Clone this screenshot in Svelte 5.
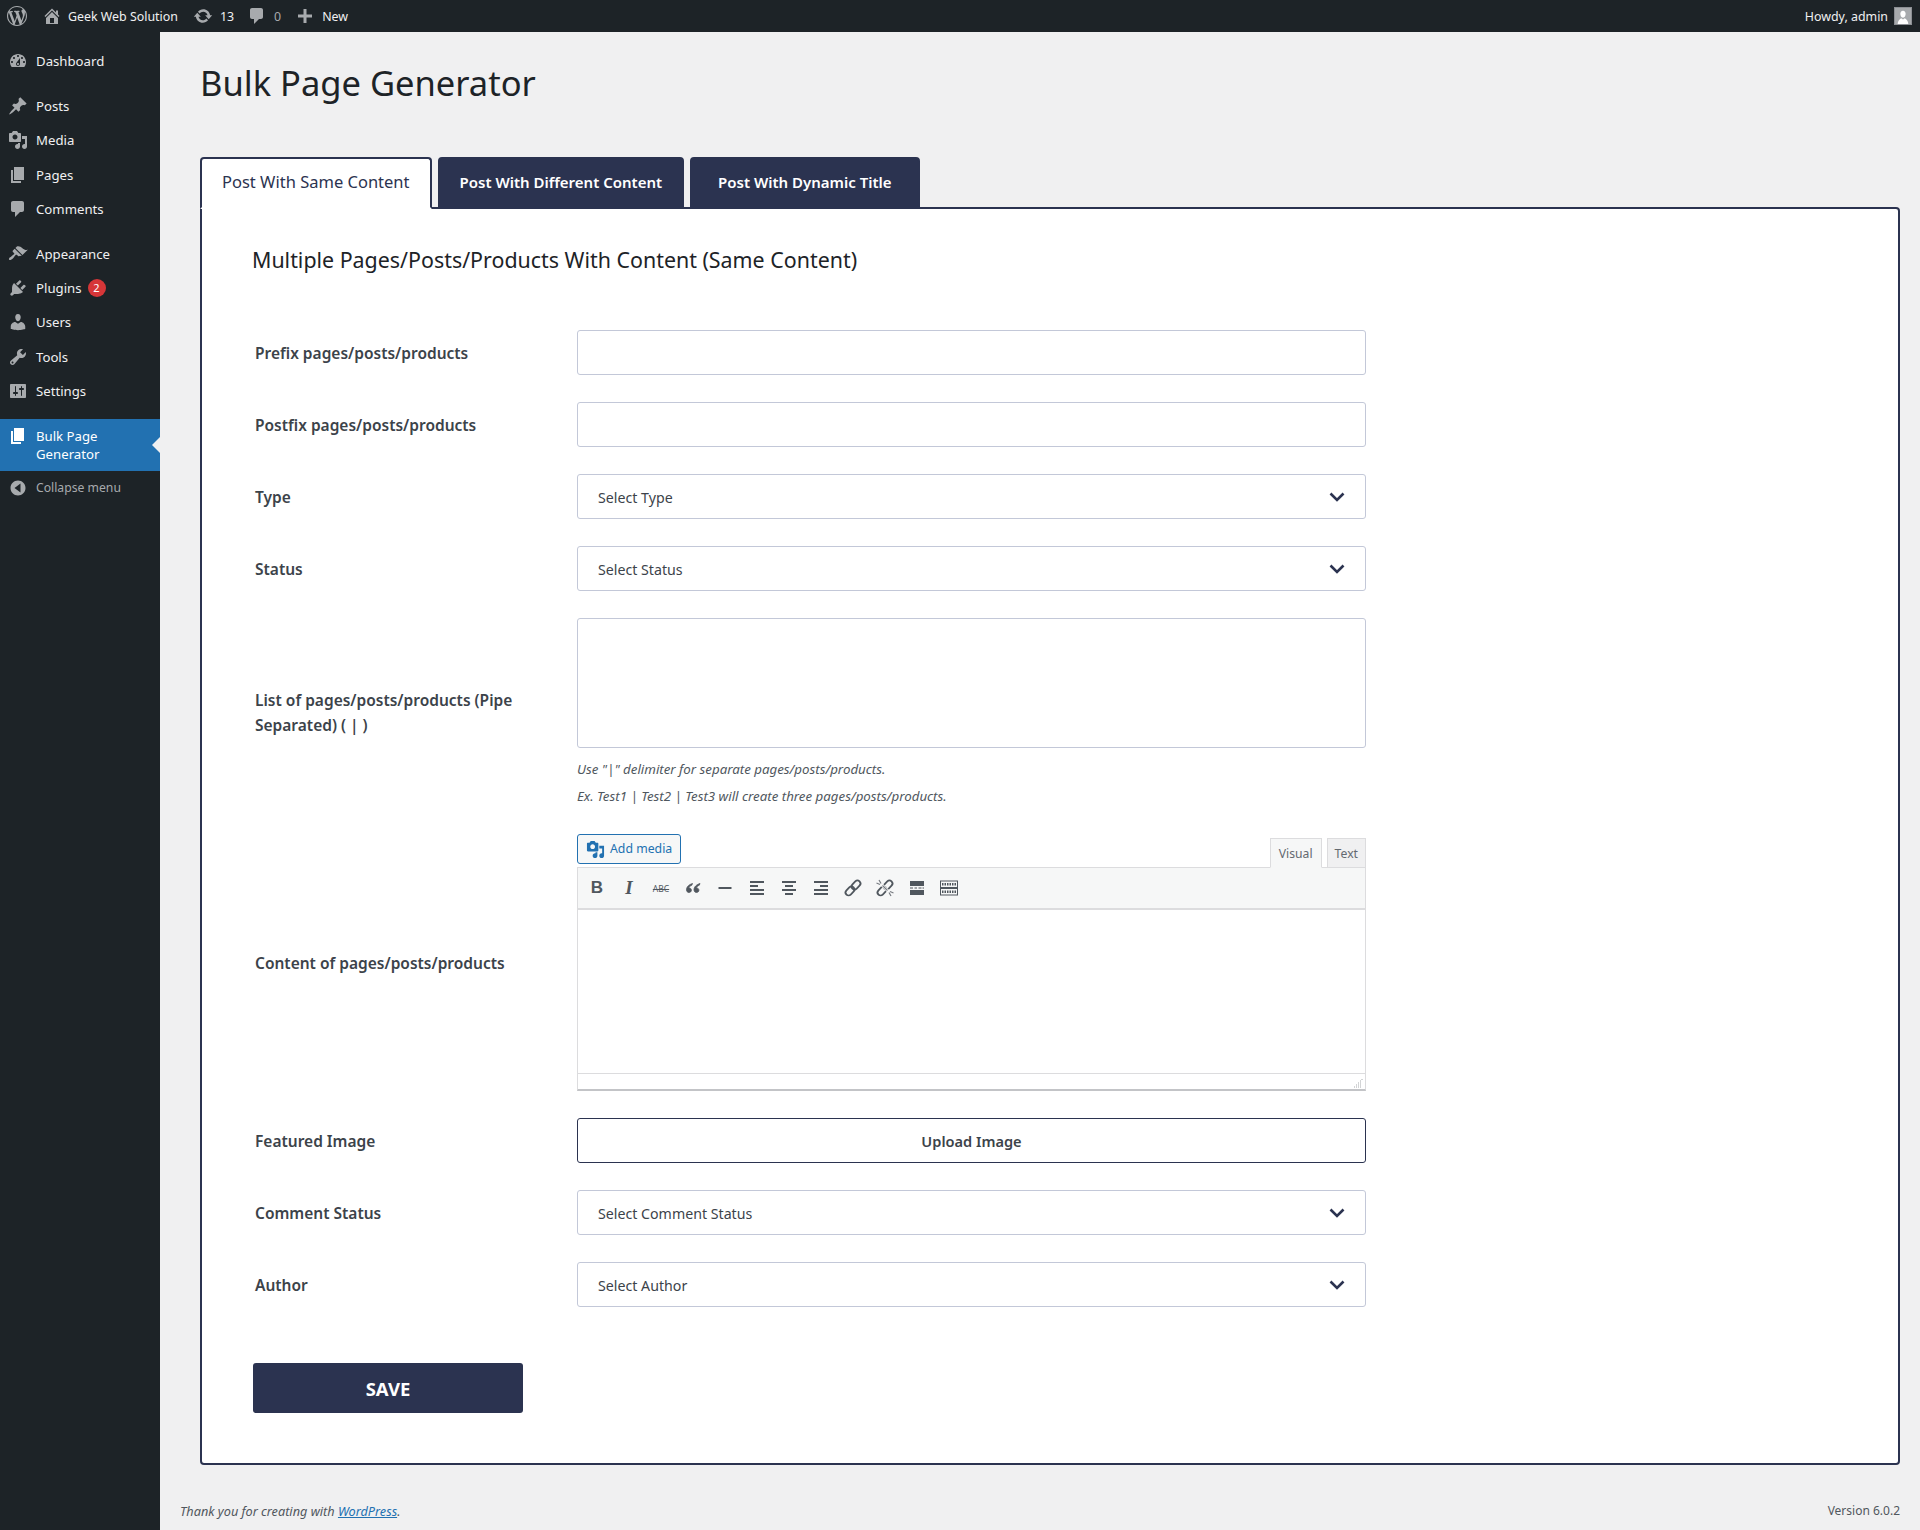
<script>
  const wpLogo = "M20 10c0-5.51-4.49-10-10-10C4.48 0 0 4.49 0 10c0 5.52 4.48 10 10 10 5.51 0 10-4.48 10-10zM7.78 15.37L4.37 6.22c.55-.02 1.17-.08 1.17-.08.5-.06.44-1.13-.06-1.11 0 0-1.45.11-2.37.11-.18 0-.37 0-.58-.01C4.12 2.69 6.87 1.11 10 1.11c2.33 0 4.45.87 6.05 2.34-.68-.11-1.65.39-1.65 1.58 0 .74.45 1.36.9 2.1.35.61.55 1.36.55 2.46 0 1.49-1.4 5-1.4 5l-3.03-8.37c.54-.02.82-.17.82-.17.5-.05.44-1.25-.06-1.22 0 0-1.44.12-2.38.12-.87 0-2.33-.12-2.33-.12-.5-.03-.56 1.2-.06 1.22l.92.08 1.26 3.41zM17.41 10c.24-.64.74-1.87.43-4.25.7 1.29 1.05 2.71 1.05 4.25 0 3.29-1.73 6.24-4.4 7.78.97-2.59 1.94-5.2 2.92-7.78zM6.1 18.09C3.12 16.65 1.11 13.53 1.11 10c0-1.3.23-2.48.72-3.59C3.25 10.3 4.67 14.2 6.1 18.09zm4.03-6.63l2.58 6.98c-.86.29-1.76.45-2.71.45-.79 0-1.57-.11-2.29-.33.81-2.38 1.62-4.74 2.42-7.1z";
  const home = "M16 8.5l1.53 1.53-1.06 1.06L10 4.62l-6.47 6.47-1.06-1.06L10 2.5l4 4v-2h2v4zm-6-2.46l6 5.99V18H4v-6.03zM12 17v-5H8v5h4z";
  const updates = "M10.2 3.28c3.53 0 6.43 2.61 6.92 6h2.08l-3.5 4-3.5-4h2.32c-.45-1.97-2.21-3.45-4.32-3.45-1.45 0-2.73.71-3.54 1.78L4.95 5.66C6.23 4.2 8.11 3.28 10.2 3.28zm-.4 13.44c-3.52 0-6.43-2.61-6.92-6H.8l3.5-4c1.17 1.33 2.33 2.67 3.5 4H5.48c.45 1.97 2.21 3.45 4.32 3.45 1.45 0 2.73-.71 3.54-1.78l1.71 1.95c-1.28 1.46-3.15 2.38-5.25 2.38z";
  const comment = "M5 2h9c1.1 0 2 .9 2 2v7c0 1.1-.9 2-2 2h-2l-5 5v-5H5c-1.1 0-2-.9-2-2V4c0-1.1.9-2 2-2z";
  const plus = "M17 8.5v3h-5.5V17h-3v-5.5H3v-3h5.5V3h3v5.5z";
  const media = "M13 11V4c0-.55-.45-1-1-1h-1.67L9 1H5L3.67 3H2c-.55 0-1 .45-1 1v7c0 .55.45 1 1 1h10c.55 0 1-.45 1-1zM7 4.5c1.38 0 2.5 1.12 2.5 2.5S8.38 9.5 7 9.5 4.5 8.38 4.5 7 5.62 4.5 7 4.5zM14 6h5v10.5c0 1.38-1.12 2.5-2.5 2.5S14 17.88 14 16.5s1.12-2.5 2.5-2.5c.17 0 .34.02.5.05V9h-3V6zm-4 8.05V13h2v3.5c0 1.38-1.12 2.5-2.5 2.5S7 17.88 7 16.5 8.12 14 9.5 14c.17 0 .34.02.5.05z";
  const page = "M6 15V2h10v13H6zm-1 1h8v2H3V5h2v11z";

  const menu = [
    { label: "Dashboard", icon: "M3.76 16h12.48c1.1-1.37 1.76-3.11 1.76-5 0-4.42-3.58-8-8-8s-8 3.58-8 8c0 1.89.66 3.63 1.76 5zM10 4c.55 0 1 .45 1 1s-.45 1-1 1-1-.45-1-1 .45-1 1-1zM6 6c.55 0 1 .45 1 1s-.45 1-1 1-1-.45-1-1 .45-1 1-1zm8 0c.55 0 1 .45 1 1s-.45 1-1 1-1-.45-1-1 .45-1 1-1zm-5.37 5.55L12 7v6c0 1.1-.9 2-2 2s-2-.9-2-2c0-.57.24-1.08.63-1.45zM4 10c.55 0 1 .45 1 1s-.45 1-1 1-1-.45-1-1 .45-1 1-1zm12 0c.55 0 1 .45 1 1s-.45 1-1 1-1-.45-1-1 .45-1 1-1zm-5 3c0-.55-.45-1-1-1s-1 .45-1 1 .45 1 1 1 1-.45 1-1z", gap: true },
    { label: "Posts", icon: "M10.44 3.02l1.82-1.82 6.36 6.35-1.83 1.82c-1.05-.68-2.48-.57-3.41.36l-.75.75c-.92.93-1.04 2.35-.35 3.41l-1.83 1.82-2.41-2.41-2.8 2.79c-.42.42-3.38 2.71-3.8 2.29s1.86-3.39 2.28-3.81l2.79-2.79L4.1 9.36l1.83-1.82c1.05.69 2.48.57 3.4-.36l.75-.75c.93-.92 1.05-2.35.36-3.41z" },
    { label: "Media", icon: media },
    { label: "Pages", icon: page },
    { label: "Comments", icon: comment, gap: true },
    { label: "Appearance", icon: "M14.48 11.06L7.41 3.99l1.5-1.5c.5-.56 2.3-.47 3.51.32 1.21.8 1.43 1.28 2.91 2.1 1.18.64 2.45 1.26 4.45.85zm-.71.71L6.7 4.7 4.93 6.47c-.39.39-.39 1.02 0 1.41l1.06 1.06c.39.39.39 1.03 0 1.42-.6.6-1.43 1.11-2.21 1.69-.35.26-.7.53-1.01.84C1.43 13.23.4 14.97 1.2 15.77c.79.8 2.54-.23 3.89-1.58.31-.31.58-.66.85-1.02.57-.78 1.08-1.61 1.69-2.21.39-.39 1.02-.39 1.41 0l1.06 1.06c.39.39 1.02.39 1.41 0z" },
    { label: "Plugins", badge: 2, icon: "M13.11 4.36L9.87 7.6 8 5.73l3.24-3.24c.35-.34 1.05-.2 1.56.32.52.51.66 1.21.31 1.55zm-8 1.77l.91-1.12 9.01 9.01-1.19.84c-.71.71-2.63 1.16-3.82 1.16H6.14L4.9 17.26c-.59.59-1.54.59-2.12 0-.59-.58-.59-1.53 0-2.12l1.24-1.24v-3.88c0-1.13.4-3.19 1.09-3.89zm7.26 3.97l3.24-3.24c.34-.35 1.04-.21 1.55.31.52.51.66 1.21.31 1.55l-3.24 3.25z" },
    { label: "Users", icon: "M10 9.25c-2.27 0-2.73-3.44-2.73-3.44C7 4.02 7.82 2 9.97 2c2.16 0 2.98 2.02 2.71 3.81 0 0-.41 3.44-2.68 3.44zm0 2.57L12.72 10c2.39 0 4.52 2.33 4.52 4.53v2.49s-3.65 1.13-7.24 1.13c-3.65 0-7.24-1.13-7.24-1.13v-2.49c0-2.25 1.94-4.48 4.47-4.48z" },
    { label: "Tools", icon: "M16.68 9.77c-1.34 1.34-3.3 1.67-4.95.99l-5.41 6.52c-.99.99-2.59.99-3.58 0s-.99-2.59 0-3.57l6.52-5.42c-.68-1.65-.35-3.61.99-4.95 1.28-1.28 3.12-1.62 4.72-1.06l-2.89 2.89 2.82 2.82 2.86-2.87c.53 1.58.18 3.39-1.08 4.65zM3.81 16.21c.4.39 1.04.39 1.43 0 .4-.4.4-1.04 0-1.43-.39-.4-1.03-.4-1.43 0-.39.39-.39 1.03 0 1.43z" },
    { label: "Settings", gap: true, icon: "M18 16V4c0-.55-.45-1-1-1H3c-.55 0-1 .45-1 1v12c0 .55.45 1 1 1h14c.55 0 1-.45 1-1zM8 11h1c.55 0 1 .45 1 1s-.45 1-1 1H8v1.5c0 .28-.22.5-.5.5s-.5-.22-.5-.5V13H6c-.55 0-1-.45-1-1s.45-1 1-1h1V5.5c0-.28.22-.5.5-.5s.5.22.5.5V11zm5-2h-1c-.55 0-1-.45-1-1s.45-1 1-1h1V5.5c0-.28.22-.5.5-.5s.5.22.5.5V7h1c.55 0 1 .45 1 1s-.45 1-1 1h-1v5.5c0 .28-.22.5-.5.5s-.5-.22-.5-.5V9z" },
    { label: "Bulk Page Generator", icon: page, active: true }
  ];

  // toolbar buttons, in order
  const toolbar = [
    { text: "B", cls: "tb-bold" },
    { text: "I", cls: "tb-italic" },
    { text: "ABC", cls: "tb-strike" },
    { d: "M9.5 5.5C6 6.6 3.5 8.8 3.5 11.8c0 1.6 1 2.7 2.4 2.7s2.5-1 2.5-2.3-1-2.3-2.2-2.3c-.2 0-.4 0-.5.1.2-1 1.4-2.1 3.1-2.8zM17 5.500c-3.500 1.100-6 3.300-6 6.300 0 1.600 1 2.700 2.400 2.700s2.500-1 2.500-2.300-1-2.300-2.200-2.300c-.2 0-.4 0-.5.1.2-1 1.400-2.100 3.100-2.800z", thick: true },
    { d: "M3.500 9h13v2h-13z" },
    { d: "M3 3h14v2H3zM3 7h8v2H3zM3 11h14v2H3zM3 15h14v2H3z" },
    { d: "M3 3h14v2H3zM6 7h8v2H6zM3 11h14v2H3zM6 15h8v2H6z" },
    { d: "M3 3h14v2H3zM9 7h8v2H9zM3 11h14v2H3zM3 15h14v2H3z" },
    { link: true },
    { link: true, broken: true },
    { d: "M3 3h14v5H3zM3 9.500h3v1H3zM7.500 9.500h2.500v1H7.500zM11.500 9.500h3v1h-3zM15.500 9.500h1.500v1h-1.500zM3 12h14v5H3z" },
    { kitchen: true }
  ];
</script>

<div class="adminbar">
  <svg class="bar-icon logo" viewBox="0 0 20 20"><path d={wpLogo} /></svg>
  <svg class="bar-icon home" viewBox="0 0 20 20"><path d={home} /></svg>
  <span class="bar-text site">Geek Web Solution</span>
  <svg class="bar-icon upd" viewBox="0 0 20 20"><path d={updates} /></svg>
  <span class="bar-text count">13</span>
  <svg class="bar-icon cmt" viewBox="0 0 20 20"><path d={comment} /></svg>
  <span class="bar-text zero">0</span>
  <svg class="bar-icon plus" viewBox="0 0 20 20"><path d={plus} /></svg>
  <span class="bar-text">New</span>
  <span class="bar-text howdy">Howdy, admin</span>
  <span class="avatar">
    <svg viewBox="0 0 18 18"><path d="M9 3c-2 0-3 1.500-3 3.500S7 11 9 11s3-2.500 3-4.500S11 3 9 3zM3 18c0-3.500 2.500-6 4-6.500L9 13l2-1.500c1.500.5 4 3 4 6.500z" /></svg>
  </span>
</div>

<div class="layout">
  <nav class="sidebar">
    {#each menu as item}
      <a class="menu-item" class:active={item.active} class:gap={item.gap} href="#top">
        <svg class="menu-icon" viewBox="0 0 20 20"><path d={item.icon} /></svg>
        <span class="menu-label">{item.label}</span>
        {#if item.badge}<span class="badge">{item.badge}</span>{/if}
      </a>
    {/each}
    <div class="collapse">
      <svg class="menu-icon" viewBox="0 0 20 20"><path d="M10 2.500c-4.140 0-7.500 3.360-7.500 7.500s3.360 7.500 7.500 7.500 7.500-3.360 7.500-7.500-3.360-7.500-7.500-7.500zM12.500 14.500L6.500 10l6-4.500z" fill-rule="evenodd" /></svg>
      <span>Collapse menu</span>
    </div>
  </nav>

  <main class="main">
    <h1>Bulk Page Generator</h1>

    <div class="tabs">
      <button class="tab current">Post With Same Content</button>
      <button class="tab">Post With Different Content</button>
      <button class="tab">Post With Dynamic Title</button>
    </div>

    <section class="panel">
      <h2>Multiple Pages/Posts/Products With Content (Same Content)</h2>

      <div class="form">
        <div class="row">
          <label for="prefix">Prefix pages/posts/products</label>
          <div class="field"><input id="prefix" type="text" /></div>
        </div>
        <div class="row">
          <label for="postfix">Postfix pages/posts/products</label>
          <div class="field"><input id="postfix" type="text" /></div>
        </div>
        {#each ["Type", "Status"] as name}
          <div class="row">
            <label for={name}>{name}</label>
            <div class="field select-wrap">
              <select id={name}><option>Select {name}</option></select>
              <svg class="chevron" viewBox="0 0 16 10"><path d="M1.500 1.500L8 8l6.500-6.500" /></svg>
            </div>
          </div>
        {/each}
        <div class="row">
          <label for="list">List of pages/posts/products (Pipe Separated) ( | )</label>
          <div class="field">
            <textarea id="list"></textarea>
            <p class="hint first">Use "|" delimiter for separate pages/posts/products.</p>
            <p class="hint last">Ex. Test1 | Test2 | Test3 will create three pages/posts/products.</p>
          </div>
        </div>
        <div class="row">
          <label for="content">Content of pages/posts/products</label>
          <div class="field">
            <div class="editor-top">
              <button class="add-media">
                <svg viewBox="0 0 20 20"><path d={media} /></svg>
                Add media
              </button>
              <div class="editor-tabs">
                <button class="editor-tab on">Visual</button>
                <button class="editor-tab">Text</button>
              </div>
            </div>
            <div class="editor">
              <div class="toolbar">
                {#each toolbar as t}
                  <span class="tool">
                    {#if t.text}
                      <span class={t.cls}>{t.text}</span>
                    {:else if t.kitchen}
                      <svg viewBox="0 0 20 20">
                        <rect x="1.500" y="3" width="17" height="6.500" class="line thin" />
                        <rect x="1.500" y="10.500" width="17" height="6.500" class="line thin" />
                        <path d="M3 6.250h14M3 13.750h14" class="dots" />
                      </svg>
                    {:else if t.link}
                      <svg viewBox="0 0 20 20">
                        <rect x="2" y="10" width="10" height="6" rx="3" transform="rotate(-45 7 13)" class="line" />
                        <rect x="8" y="4" width="10" height="6" rx="3" transform="rotate(-45 13 7)" class="line" />
                        {#if t.broken}
                          <path d="M5.500 5.500l9 9" class="gap-line" />
                          <path d="M4 2l2 3.500M1.500 5l3.500 1.500M7.500 7.500l5 5M16 18l-2-3.500M18.500 15L15 13.500" class="ray" />
                        {/if}
                      </svg>
                    {:else}
                      <svg viewBox="0 0 20 20">
                        <path d={t.d} class:thick={t.thick} />
                      </svg>
                    {/if}
                  </span>
                {/each}
              </div>
              <div id="content" class="edit-area"></div>
              <div class="status">
                <svg class="resize" viewBox="0 0 10 10"><path d="M9 1v1M7 3h2M5 5h4M3 7h6M1 9h8" /></svg>
              </div>
            </div>
          </div>
        </div>
        <div class="row">
          <label for="upload">Featured Image</label>
          <div class="field"><button id="upload" class="upload">Upload Image</button></div>
        </div>
        {#each ["Comment Status", "Author"] as name}
          <div class="row">
            <label for={name}>{name}</label>
            <div class="field select-wrap">
              <select id={name}><option>Select {name}</option></select>
              <svg class="chevron" viewBox="0 0 16 10"><path d="M1.500 1.500L8 8l6.500-6.500" /></svg>
            </div>
          </div>
        {/each}
      </div>

      <button class="save">SAVE</button>
    </section>

    <footer class="foot">
      <em>Thank you for creating with <a href="#top">WordPress</a>.</em>
      <span class="version">Version 6.0.2</span>
    </footer>
  </main>
</div>

<style>
  :global(body) {
    background: #f0f0f1;
    font-family: "Noto Sans", "Open Sans", sans-serif;
    color: #3c434a;
  }

  .adminbar {
    height: 32px;
    background: #1d2327;
    display: flex;
    align-items: center;
    padding-right: 8px;
    font-size: 12.4px;
    color: #f0f0f1;
  }
  .bar-icon {
    fill: #a7aaad;
    flex: none;
  }
  .logo { width: 20px; height: 20px; margin-left: 7px; }
  .home { width: 20px; height: 20px; margin-left: 15px; }
  .site { margin-left: 6px; }
  .upd { width: 20px; height: 20px; margin-left: 15px; }
  .count { margin-left: 7px; }
  .cmt { width: 20px; height: 20px; margin-left: 13px; }
  .zero { margin-left: 7px; color: #a7aaad; }
  .plus { width: 20px; height: 20px; margin-left: 14px; }
  .plus + .bar-text { margin-left: 7px; }
  .howdy { margin-left: auto; margin-right: 6px; }
  .avatar {
    width: 18px;
    height: 18px;
    background: #a7aaad;
    border: 1px solid #8c8f94;
    box-sizing: border-box;
  }
  .avatar svg { display: block; width: 16px; height: 16px; fill: #fff; }

  .layout {
    display: flex;
    min-height: 1498px;
  }
  .sidebar {
    width: 160px;
    flex: none;
    background: #1d2327;
    padding-top: 12px;
    box-sizing: border-box;
  }
  .menu-item {
    position: relative;
    display: flex;
    align-items: center;
    min-height: 34.200px;
    color: #f0f0f1;
    text-decoration: none;
    font-size: 13.2px;
    line-height: 18px;
  }
  .menu-item.gap { margin-bottom: 11px; }
  .menu-icon {
    width: 20px;
    height: 20px;
    margin-left: 8px;
    flex: none;
    fill: #a7aaad;
  }
  .menu-label { margin-left: 8px; }
  .menu-item.active {
    background: #2271b1;
    color: #fff;
    min-height: 52px;
  }
  .menu-item.active .menu-icon { fill: #fff; align-self: flex-start; margin-top: 7px; }
  .menu-item.active .menu-label { width: 90px; }
  .menu-item.active::after {
    content: "";
    position: absolute;
    right: 0;
    top: 50%;
    margin-top: -8px;
    border: 8px solid transparent;
    border-right-color: #f0f0f1;
    border-left-width: 0;
  }
  .badge {
    width: 18px;
    height: 18px;
    margin-left: 6px;
    border-radius: 50%;
    background: #d63638;
    color: #fff;
    font-size: 11px;
    line-height: 18px;
    text-align: center;
  }
  .collapse {
    display: flex;
    align-items: center;
    gap: 8px;
    height: 34px;
    color: #a7aaad;
    font-size: 12.2px;
  }

  .main {
    flex: 1;
    min-width: 0;
    display: flex;
    flex-direction: column;
    padding: 0 20px 0 40px;
  }
  h1 {
    margin: 26px 0 49px;
    font-size: 34.5px;
    line-height: 50px;
    font-weight: 400;
    color: #1d2327;
  }
  .tabs {
    display: flex;
    gap: 6px;
    margin-bottom: -2px;
    position: relative;
    z-index: 1;
  }
  .tab {
    height: 52px;
    padding: 0 26px 2px;
    border: 2px solid #2b3350;
    border-radius: 4px 4px 0 0;
    background: #2b3350;
    color: #fff;
    font: 600 15px "Noto Sans", sans-serif;
  }
  .tab:nth-child(2) { padding: 0 20px 2px; }
  .tab.current {
    background: #fff;
    color: #2b3350;
    border-bottom-color: #fff;
    font-weight: 400;
    padding: 0 20px 4px;
    font-size: 16.5px;
  }

  .panel {
    border: 2px solid #2b3350;
    border-radius: 0 4px 4px 4px;
    background: #fff;
    padding: 36px 0 50px 50px;
  }
  h2 {
    margin: 0 0 55px;
    font-size: 21.4px;
    line-height: 30px;
    font-weight: 400;
    color: #1d2327;
  }
  .form {
    display: flex;
    flex-direction: column;
    gap: 27px;
  }
  .row {
    display: flex;
    align-items: center;
  }
  .row label {
    width: 322px;
    padding: 1px 36px 0 3px;
    box-sizing: border-box;
    font-size: 15.500px;
    font-weight: 600;
    line-height: 25px;
    color: #3c434a;
  }
  .field {
    width: 789px;
    margin-left: 3px;
  }
  input, select, textarea {
    display: block;
    width: 100%;
    box-sizing: border-box;
    border: 1px solid #c3c8d8;
    border-radius: 3px;
    background: #fff;
    margin: 0;
    outline: none;
  }
  input, select { height: 45px; }
  select {
    appearance: none;
    padding: 1px 40px 0 20px;
    font: 14.2px "Noto Sans", sans-serif;
    color: #3c434a;
  }
  textarea { height: 130px; resize: none; }
  .select-wrap { position: relative; }
  .chevron {
    position: absolute;
    right: 21px;
    top: 18px;
    width: 16px;
    height: 10px;
    fill: none;
    stroke: #2b3350;
    stroke-width: 2.600;
    pointer-events: none;
  }
  .hint {
    margin: 0;
    font-size: 13.3px;
    font-style: italic;
    line-height: 26px;
    color: #50575e;
  }
  .hint.first { margin-top: 8px; }
  .hint.last { margin-top: 1px; margin-bottom: -2px; }

  .editor-top {
    display: flex;
    justify-content: space-between;
    align-items: flex-end;
    margin-bottom: -1px;
    position: relative;
    z-index: 1;
    height: 34px;
  }
  .add-media {
    display: flex;
    align-items: center;
    gap: 5px;
    width: 104px;
    height: 30px;
    padding: 0 0 2px 8px;
    margin-bottom: 4px;
    box-sizing: border-box;
    border: 1px solid #2271b1;
    border-radius: 3px;
    background: #f6f7f7;
    color: #2271b1;
    font: 12.3px "Noto Sans", sans-serif;
  }
  .add-media svg { width: 19px; height: 19px; fill: #2271b1; margin-top: 2px; }
  .editor-tabs { display: flex; gap: 5px; }
  .editor-tab {
    height: 30px;
    padding: 0 7px;
    box-sizing: border-box;
    border: 1px solid #dcdcde;
    background: #f0f0f1;
    color: #646970;
    font: 12.2px "Noto Sans", sans-serif;
  }
  .editor-tab.on {
    background: #f6f7f7;
    border-bottom-color: #f6f7f7;
    padding: 0 8px;
  }
  .editor {
    border: 1px solid #dcdcde;
    border-bottom-color: #c3c4c7;
    border-bottom-width: 2px;
    background: #fff;
  }
  .toolbar {
    display: flex;
    align-items: center;
    height: 42px;
    padding-left: 3px;
    background: #f6f7f7;
    border-bottom: 2px solid #dcdcde;
    box-sizing: border-box;
  }
  .tool {
    width: 32px;
    height: 24px;
    display: flex;
    align-items: center;
    justify-content: center;
    color: #50575e;
  }
  .tool svg { width: 20px; height: 20px; fill: #50575e; }
  .tool .thick { stroke: #50575e; stroke-width: 0.8; }
  .tool .line { fill: none; stroke: #50575e; stroke-width: 1.800; }
  .tool .thin { stroke-width: 1; }
  .tool .dots { fill: none; stroke: #50575e; stroke-width: 2.500; stroke-dasharray: 1.500 1; }
  .tool .gap-line { fill: none; stroke: #f6f7f7; stroke-width: 3; }
  .tool .ray { fill: none; stroke: #787c82; stroke-width: 1.200; }
  .tb-bold { font-weight: 700; font-size: 17px; font-family: "Liberation Sans", sans-serif; }
  .tb-italic { font-style: italic; font-size: 19px; font-family: "Liberation Serif", serif; font-weight: 700; }
  .tb-strike { font-size: 8.500px; text-decoration: line-through; }
  .edit-area { height: 163px; }
  .status {
    height: 16px;
    border-top: 1px solid #dcdcde;
    box-sizing: border-box;
    position: relative;
  }
  .resize {
    position: absolute;
    right: 2px;
    bottom: 1px;
    width: 10px;
    height: 10px;
    stroke: #a7aaad;
    stroke-width: 1;
    stroke-dasharray: 1 1;
  }
  .upload {
    display: block;
    width: 100%;
    height: 45px;
    background: #fff;
    border: 1px solid #2b3350;
    border-radius: 3px;
    color: #3c434a;
    font: 600 14.6px "Noto Sans", sans-serif;
  }
  .save {
    display: block;
    width: 270px;
    height: 50px;
    margin: 56px 0 0 1px;
    border: 0;
    border-radius: 3px;
    background: #2b3350;
    color: #fff;
    font: 700 18.500px "Noto Sans", sans-serif;
  }

  .foot {
    margin: auto 0 0 -20px;
    padding-bottom: 9px;
    display: flex;
    justify-content: space-between;
    font-size: 12.7px;
    line-height: 20px;
    color: #50575e;
  }
  .foot a { color: #2271b1; }
  .version { font-size: 12px; }
</style>
